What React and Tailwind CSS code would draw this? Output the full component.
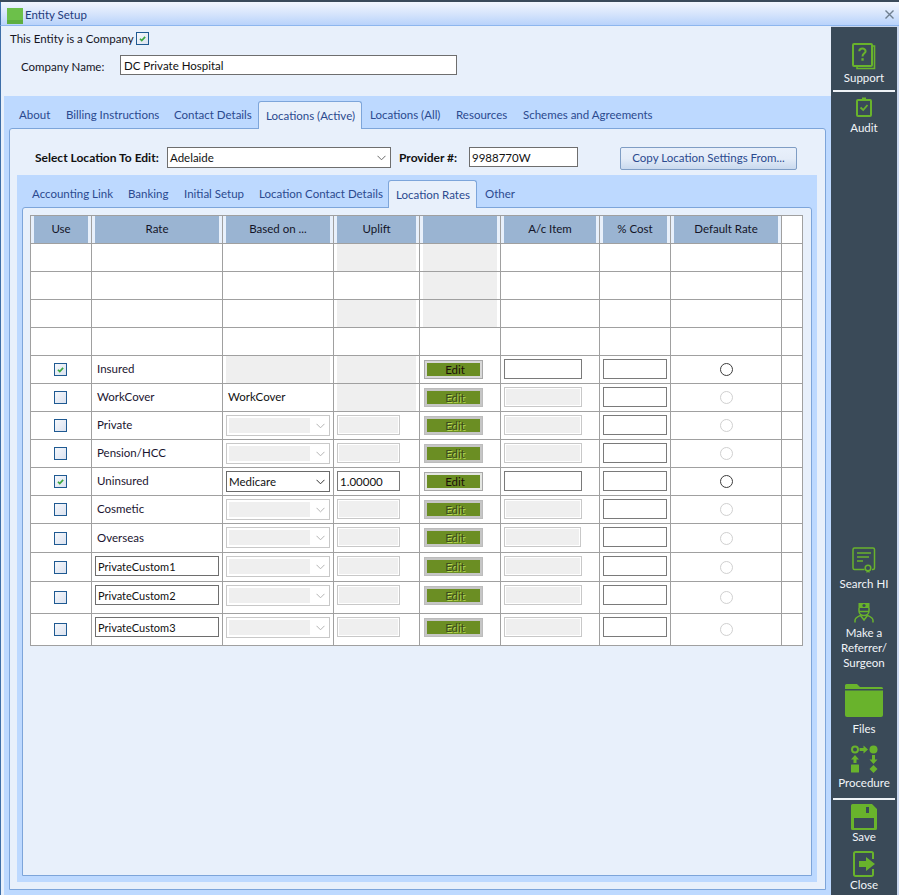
import React from "react";

const G = "#69b32c";

function Check() {
  return (
    <svg viewBox="0 0 13 13" className="absolute inset-0 w-full h-full">
      <path d="M3.5 6.8 L5.6 9 L9.6 4.6" fill="none" stroke="#3aa63f" strokeWidth="2" />
    </svg>
  );
}

function Checkbox({ checked }) {
  return (
    <div className="relative w-[13px] h-[13px] border border-[#1f5a92] bg-gradient-to-br from-[#f6f8fc] to-[#dbe2ef] shrink-0">
      {checked && <Check />}
    </div>
  );
}

function Chevron({ color = "#6a6a6a" }) {
  return (
    <svg width="9" height="6" viewBox="0 0 9 6">
      <path d="M0.5 0.8 L4.5 4.8 L8.5 0.8" fill="none" stroke={color} strokeWidth="1" />
    </svg>
  );
}

function Tab({ w, active, children, color = "text-[#2b4a8f]" }) {
  return active ? (
    <div className={`${w} h-[28px] -mb-px relative z-10 bg-[#e8f0fb] border border-b-0 border-[#7da5da] rounded-t-[3px] pl-[7px] flex items-center text-[#2b4a8f]`}>
      {children}
    </div>
  ) : (
    <div className={`${w} h-[27px] pl-[8px] flex items-center ${color}`}>{children}</div>
  );
}

function Fill() {
  return <div className="mx-[3px] w-auto flex-1 self-stretch bg-[#efefef]" />;
}

function HeadCell({ children }) {
  return (
    <div className="border-r border-b border-[#a0a0a0] px-[3px] flex">
      <div className="flex-1 bg-[#9ab4d2] flex items-center justify-center text-[#141428] pb-[2px]">{children}</div>
    </div>
  );
}

function Cell({ children, className = "" }) {
  return <div className={`border-r border-b border-[#a0a0a0] bg-white flex ${className}`}>{children}</div>;
}

function Box({ w, children, disabled }) {
  return disabled ? (
    <div className={`${w} h-[20px] mt-[3px] border border-[#c8c8c8] bg-[#efefef] shadow-[inset_0_0_0_1px_#ffffff]`} />
  ) : (
    <div className={`${w} h-[20px] mt-[3px] border border-[#7a7a7a] bg-white pl-[2px] flex items-center text-[#111]`}>{children}</div>
  );
}

function Sel({ enabled, value }) {
  return enabled ? (
    <div className="ml-[3px] mt-[3px] w-[104px] h-[21px] border border-[#6a6a6a] bg-white flex items-center pl-[2px] pr-[4px] justify-between text-[#111]">
      <span>{value}</span>
      <Chevron color="#333" />
    </div>
  ) : (
    <div className="ml-[3px] mt-[3px] w-[104px] h-[21px] border border-[#c8c8c8] bg-white flex items-center pl-[2px] pr-[4px] justify-between">
      <div className="w-[81px] h-[15px] bg-[#efefef]" />
      <Chevron color="#b4b4b4" />
    </div>
  );
}

function Edit({ enabled, light }) {
  const outer = enabled
    ? light
      ? "bg-[#e4e6e2] border-[#a8a8a8]"
      : "bg-[#d8d8d8] border-[#a8a8a8]"
    : "bg-[#c6c6c6] border-[#bcbcbc]";
  return (
    <div className={`ml-[4px] mt-[4px] w-[59px] h-[19px] border ${outer} p-[2px] flex`}>
      <div
        className={`flex-1 bg-[#6b8e23] flex items-center justify-center pl-[3px] pb-[1px] ${
          enabled ? "text-[#1c0f08]" : "text-[#3c4a1c] [text-shadow:1px_1px_0_#b8d858]"
        }`}
      >
        Edit
      </div>
    </div>
  );
}

function Radio({ enabled }) {
  return (
    <div className={`w-[13px] h-[13px] rounded-full border bg-white ${enabled ? "border-[#3c3c3c]" : "border-[#d0d0d0]"}`} />
  );
}

const rows = [
  { name: "Insured", on: true, based: "fill", uplift: "fill", ac: true },
  { name: "WorkCover", based: "WorkCover", uplift: "fill" },
  { name: "Private" },
  { name: "Pension/HCC" },
  { name: "Uninsured", on: true, sel: "Medicare", up: "1.00000", ac: true, light: true },
  { name: "Cosmetic" },
  { name: "Overseas", acw: "w-[77px]" },
  { custom: "PrivateCustom1" },
  { custom: "PrivateCustom2" },
  { custom: "PrivateCustom3" },
];

function RateTable() {
  return (
    <div className="ml-[7px] mt-[7px] w-[773px] border-l border-t border-[#a0a0a0] grid grid-cols-[61px_131px_111px_86px_81px_99px_71px_111px_21px] grid-rows-[28px_28px_28px_28px_28px_28px_28px_28px_28px_28px_28px_29px_29px_32px_32px]">
      <HeadCell>Use</HeadCell>
      <HeadCell>Rate</HeadCell>
      <HeadCell>Based on ...</HeadCell>
      <HeadCell>Uplift</HeadCell>
      <HeadCell>{" "}</HeadCell>
      <HeadCell>A/c Item</HeadCell>
      <HeadCell>% Cost</HeadCell>
      <HeadCell>Default Rate</HeadCell>
      <Cell />

      {[0, 1, 2, 3].map((i) => (
        <React.Fragment key={i}>
          <Cell />
          <Cell />
          <Cell />
          <Cell>{i % 2 === 0 && <Fill />}</Cell>
          <Cell>{i < 3 && <Fill />}</Cell>
          <Cell />
          <Cell />
          <Cell />
          <Cell />
        </React.Fragment>
      ))}

      {rows.map((r, i) => (
        <React.Fragment key={i}>
          <Cell className="items-center justify-center pr-[1px]">
            <Checkbox checked={r.on} />
          </Cell>
          <Cell className={r.custom ? "" : "items-center pl-[5px] pb-[2px] text-[#1a1430]"}>
            {r.custom ? (
              <div className="ml-[3px] mt-[3px] w-[124px] h-[20px] border border-[#6e6e6e] bg-white pl-[2px] flex items-center text-[#111] text-[11px]">
                {r.custom}
              </div>
            ) : (
              r.name
            )}
          </Cell>
          <Cell className={r.based && r.based !== "fill" ? "items-center pl-[5px] pb-[2px] text-[#111]" : ""}>
            {r.based === "fill" ? <Fill /> : r.based ? r.based : <Sel enabled={!!r.sel} value={r.sel} />}
          </Cell>
          <Cell>
            {r.uplift === "fill" ? (
              <Fill />
            ) : (
              <div className="ml-[3px]">
                <Box w="w-[63px]" disabled={!r.up}>{r.up}</Box>
              </div>
            )}
          </Cell>
          <Cell>
            <Edit enabled={r.on} light={r.light} />
          </Cell>
          <Cell className="pl-[3px]">
            <Box w={r.acw || "w-[78px]"} disabled={!r.ac} />
          </Cell>
          <Cell className="pl-[3px]">
            <Box w="w-[64px]" />
          </Cell>
          <Cell className="items-center justify-center">
            <Radio enabled={r.on} />
          </Cell>
          <Cell />
        </React.Fragment>
      ))}
    </div>
  );
}

function SideItem({ mt, icon, label }) {
  return (
    <div className={`${mt} flex flex-col items-center text-[#f2f5f8] leading-[15px] text-center`}>
      {icon}
      {label}
    </div>
  );
}

const SupportIcon = (
  <svg width="24" height="27" viewBox="0 0 24 27" fill="none">
    <path d="M20 3 H22.5 V25.5 H5 V23" stroke={G} strokeWidth="1.6" />
    <rect x="1" y="1" width="19" height="22" rx="1" stroke={G} strokeWidth="2" />
    <path d="M7.3 8.2 C7.3 4.6 13.6 4.6 13.6 8.2 C13.6 10.4 10.5 10.4 10.5 13.4" stroke={G} strokeWidth="2" />
    <rect x="9.4" y="15.2" width="2.3" height="2.5" fill={G} />
  </svg>
);

const AuditIcon = (
  <svg width="16" height="20" viewBox="0 0 16 20" fill="none">
    <rect x="1" y="3" width="14" height="16" rx="1" stroke={G} strokeWidth="2" />
    <rect x="6" y="0.5" width="4" height="3" fill={G} />
    <path d="M4.5 10.5 L7.2 13 L11.5 8" stroke={G} strokeWidth="1.8" />
  </svg>
);

const SearchIcon = (
  <svg width="24" height="26" viewBox="0 0 24 26" fill="none">
    <path d="M12.5 22.5 H2.5 A1.5 1.5 0 0 1 1 21 V2.5 A1.5 1.5 0 0 1 2.5 1 H21 A1.5 1.5 0 0 1 22.5 2.5 V21 A1.5 1.5 0 0 1 21 22.5 H20" stroke={G} strokeWidth="1.5" />
    <path d="M5 6 H19 M5 10 H17 M5 14 H11" stroke={G} strokeWidth="1.5" />
    <circle cx="16" cy="21" r="2.8" stroke={G} strokeWidth="1.5" />
    <path d="M14.5 23.5 V26 L16 25 L17.5 26 V23.5" fill={G} />
  </svg>
);

const SurgeonIcon = (
  <svg width="20" height="21" viewBox="0 0 20 21" fill="none">
    <path d="M4.5 1 H15.5 V6 H4.5 Z" fill={G} />
    <circle cx="10" cy="3.5" r="1.6" fill="#3a4a58" />
    <path d="M5 6 V9 C5 15 15 15 15 9 V6" stroke={G} strokeWidth="1.5" />
    <path d="M1 20.5 V18.5 C1 15.5 4 14.5 6.5 13.5 L10 18 L13.5 13.5 C16 14.5 19 15.5 19 18.5 V20.5" stroke={G} strokeWidth="1.5" />
    <path d="M5 9.5 H15" stroke={G} strokeWidth="1.5" />
  </svg>
);

const FolderIcon = (
  <svg width="38" height="33" viewBox="0 0 38 33">
    <path d="M0 5 V1.5 A1.5 1.5 0 0 1 1.5 0 H12 L15 3 H36.5 A1.5 1.5 0 0 1 38 4.5 V5 Z" fill={G} />
    <path d="M0 6.5 H38 V31 A2 2 0 0 1 36 33 H2 A2 2 0 0 1 0 31 Z" fill={G} />
  </svg>
);

const ProcedureIcon = (
  <svg width="27" height="28" viewBox="0 0 27 28" fill="none">
    <circle cx="4" cy="4.5" r="3" stroke={G} strokeWidth="2" />
    <path d="M8.5 3 H12.5 V0.5 L17 4.5 L12.5 8.5 V6 H8.5 Z" fill={G} />
    <circle cx="22.5" cy="4.5" r="4" fill={G} />
    <path d="M21 10 H24 V14.5 H26.5 L22.5 19 L18.5 14.5 H21 Z" fill={G} />
    <path d="M22.5 20 L26.5 24 L22.5 28 L18.5 24 Z" fill={G} />
    <path d="M2.5 18 V14.5 H0 L4 10 L8 14.5 H5.5 V18 Z" fill={G} />
    <rect x="0" y="19.5" width="8" height="8" rx="0.5" fill={G} />
  </svg>
);

const SaveIcon = (
  <svg width="26" height="26" viewBox="0 0 26 26">
    <path fillRule="evenodd" d="M1.5 0 H21 L26 5 V24.5 A1.5 1.5 0 0 1 24.5 26 H1.5 A1.5 1.5 0 0 1 0 24.5 V1.5 A1.5 1.5 0 0 1 1.5 0 Z M3 14 V24 H23 V14 Z M15 3 V9 H18 V3 Z" fill={G} />
  </svg>
);

const CloseIcon = (
  <svg width="22" height="26" viewBox="0 0 22 26" fill="none">
    <path d="M20 8 V2.5 A1.5 1.5 0 0 0 18.5 1 H2.5 A1.5 1.5 0 0 0 1 2.5 V23.5 A1.5 1.5 0 0 0 2.5 25 H18.5 A1.5 1.5 0 0 0 20 23.5 V18" stroke={G} strokeWidth="2" />
    <path d="M6 10 H13 V6 L22 13 L13 20 V16 H6 Z" fill={G} />
  </svg>
);

export default function App() {
  return (
    <div className="w-[899px] h-[895px] overflow-hidden whitespace-nowrap flex flex-col bg-[#e8f0fb] font-['Lato','Noto_Sans',sans-serif] text-[11.5px] leading-[15px] text-[#15151f]">
      <div className="h-[2px] bg-[#3a4a5a] shrink-0" />
      <div className="h-[24px] shrink-0 flex items-center border-l border-[#3d6ea8] border-b border-b-[#8db6ee] bg-gradient-to-b from-[#f2f6fe] via-[#d7e5fc] to-[#b9d3fb] pl-[6px] pr-[5px]">
        <div className="w-[16px] h-[16px] mt-[4px] bg-[#6cc04a] flex flex-col justify-end shrink-0">
          <div className="h-[4px] bg-[#5eae40]" />
        </div>
        <span className="ml-[2px] mt-[2px] text-[#1f3b7c]">Entity Setup</span>
        <svg className="ml-auto mt-[1px]" width="9" height="9" viewBox="0 0 9 9">
          <path d="M0.5 0.5 L8.5 8.5 M8.5 0.5 L0.5 8.5" stroke="#6f7f90" strokeWidth="1.4" />
        </svg>
      </div>

      <div className="flex-1 flex min-h-0 border-l border-[#3d6ea8] bg-[#c9d7ee]">
        <div className="w-[830px] flex flex-col bg-[#e8f0fb]">
          <div className="h-[70px] shrink-0 pt-[6px]">
            <div className="pl-[9px] flex items-center h-[13px] text-[#15151f]">
              <span className="w-[126px]">This Entity is a Company</span>
              <Checkbox checked />
            </div>
            <div className="pl-[20px] mt-[10px] flex items-center">
              <span className="w-[99px] mt-[2px]">Company Name:</span>
              <div className="w-[337px] h-[20px] border border-[#6e6e6e] bg-white pl-[3px] flex items-center text-[#111]">
                DC Private Hospital
              </div>
            </div>
          </div>

          <div className="flex-1 min-h-0 ml-[3px] bg-[#bdd9ff]">
            <div className="h-[32px] pl-[7px] flex items-end">
              <Tab w="w-[47px]">About</Tab>
              <Tab w="w-[108px]">Billing Instructions</Tab>
              <Tab w="w-[92px]">Contact Details</Tab>
              <Tab w="w-[104px]" active>Locations (Active)</Tab>
              <Tab w="w-[86px]">Locations (All)</Tab>
              <Tab w="w-[67px]">Resources</Tab>
              <Tab w="w-[146px]">Schemes and Agreements</Tab>
            </div>
            <div className="ml-[5px] w-[817px] h-[762px] bg-[#e8f0fb] border border-[#7da5da] rounded-t-[3px]">
              <div className="pt-[18px] pl-[25px] flex items-start h-[46px]">
                <div className="w-[132px] h-[21px] flex items-center font-bold text-[#111] text-[12px]">Select Location To Edit:</div>
                <div className="w-[224px] h-[21px] border border-[#6e6e6e] bg-white pl-[2px] pr-[4px] flex items-center justify-between text-[#111]">
                  <span>Adelaide</span>
                  <Chevron />
                </div>
                <div className="ml-[8px] w-[70px] h-[21px] flex items-center font-bold text-[#111] text-[12px]">Provider #:</div>
                <div className="w-[109px] h-[20px] border border-[#6e6e6e] bg-white pl-[2px] flex items-center text-[#111]">9988770W</div>
                <div className="ml-[42px] w-[177px] h-[23px] border border-[#7f9dc4] rounded-[2px] bg-gradient-to-b from-[#e9f0fb] via-[#e4ecf8] to-[#c9d9ee] flex items-center justify-center text-[#2b4a8f] pb-[2px]">
                  Copy Location Settings From...
                </div>
              </div>
              <div className="ml-[7px] w-[800px] h-[707px] bg-[#bdd9ff]">
                <div className="h-[32px] pl-[7px] flex items-end">
                  <Tab w="w-[96px]">Accounting Link</Tab>
                  <Tab w="w-[56px]">Banking</Tab>
                  <Tab w="w-[75px]">Initial Setup</Tab>
                  <Tab w="w-[137px]">Location Contact Details</Tab>
                  <Tab w="w-[89px]" active>Location Rates</Tab>
                  <Tab w="w-[50px]">Other</Tab>
                </div>
                <div className="ml-[5px] w-[790px] h-[669px] bg-[#e8f0fb] border border-[#7da5da] rounded-t-[3px]">
                  <RateTable />
                </div>
              </div>
            </div>
          </div>
        </div>

        <div className="w-[66px] mt-[1px] bg-[#3a4a58] flex flex-col justify-between">
          <div className="flex flex-col">
            <SideItem mt="mt-[16px]" icon={SupportIcon} label={<span>Support</span>} />
            <div className="mx-[2px] mt-[5px] h-[2px] bg-[#eef2f6]" />
            <SideItem mt="mt-[5px]" icon={AuditIcon} label={<span className="mt-[3px]">Audit</span>} />
          </div>
          <div className="flex flex-col pb-[3px]">
            <SideItem icon={SearchIcon} label={<span className="mt-[3px]">Search HI</span>} />
            <SideItem mt="mt-[11px]" icon={SurgeonIcon} label={<span className="mt-[2px]">Make a<br />Referrer/<br />Surgeon</span>} />
            <SideItem mt="mt-[14px]" icon={FolderIcon} label={<span className="mt-[4px]">Files</span>} />
            <SideItem mt="mt-[9px]" icon={ProcedureIcon} label={<span className="mt-[2px]">Procedure</span>} />
            <div className="mx-[2px] mt-[8px] h-[2px] bg-[#eef2f6]" />
            <SideItem mt="mt-[4px]" icon={SaveIcon} label={<span className="-mt-[1px]">Save</span>} />
            <SideItem mt="mt-[7px]" icon={CloseIcon} label={<span>Close</span>} />
          </div>
        </div>
      </div>
    </div>
  );
}
